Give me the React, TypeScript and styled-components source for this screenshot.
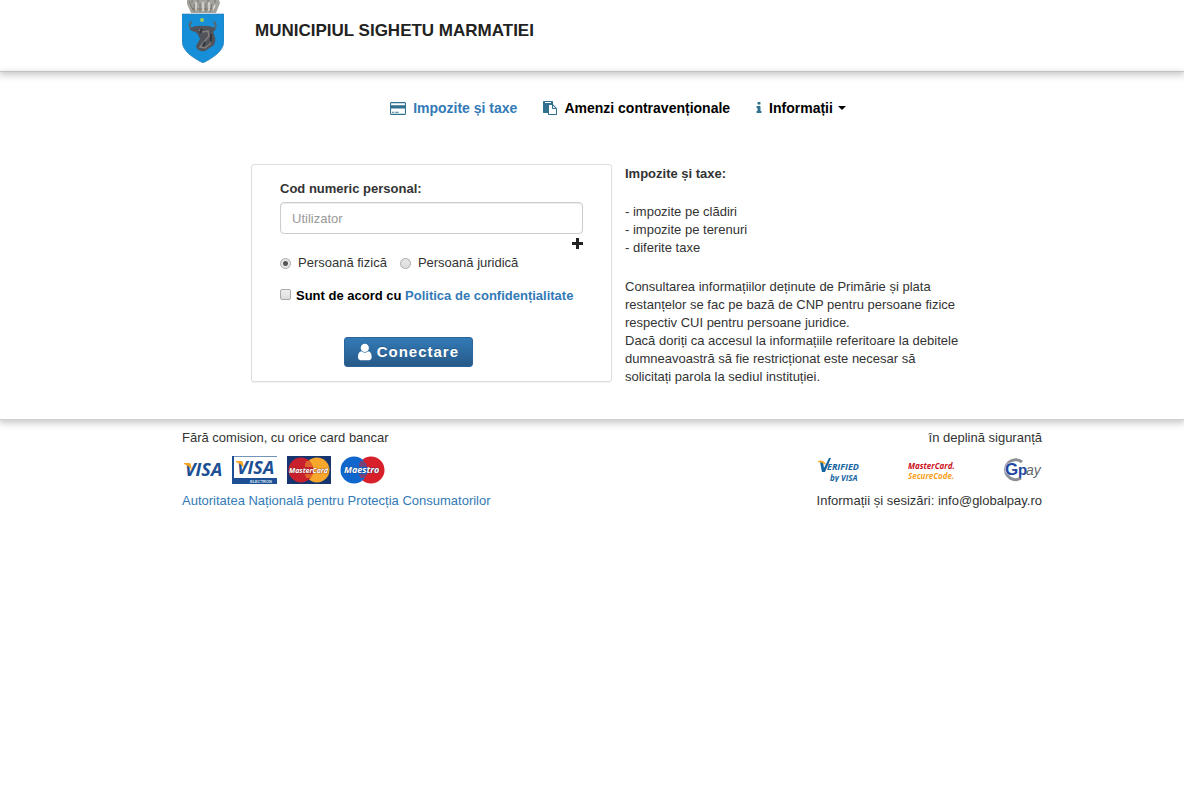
import React from "react";
import styled, { createGlobalStyle } from "styled-components";

const GlobalStyle = createGlobalStyle`
  *, *::before, *::after { box-sizing: border-box; }
  body {
    margin: 0;
    background: #fff;
    color: #333;
    font: 13px/18px "Liberation Sans", Arial, sans-serif;
  }
  a { color: #337ab7; text-decoration: none; }
`;

const Shell = styled.div`
  max-width: 900px;
  margin: 0 auto;
  padding-left: 40px;
`;

const Header = styled.header`
  border-bottom: 1px solid #d0d0d0;
  box-shadow: 0 2px 7px 1px rgba(0, 0, 0, 0.22);
`;

const Brand = styled(Shell)`
  display: flex;
  gap: 31px;
  height: 71px;
`;

const Title = styled.h1`
  margin: 21px 0 0;
  font-size: 17px;
  line-height: 20px;
  color: #222;
`;

const Main = styled.main`
  border-bottom: 1px solid #d0d0d0;
  box-shadow: 0 2px 7px 1px rgba(0, 0, 0, 0.22);
  padding-bottom: 33px;
`;

const Nav = styled.nav`
  display: flex;
  justify-content: center;
  gap: 26px;
  padding: 27px 0 47px 52px;
`;

const NavLink = styled.a<{ $active?: boolean }>`
  display: flex;
  align-items: center;
  gap: 7px;
  font-size: 14px;
  line-height: 18px;
  font-weight: bold;
  color: ${(p) => (p.$active ? "#337ab7" : "#000")};
`;

const Caret = styled.span`
  border: 4px solid transparent;
  border-top-color: #000;
  border-bottom: 0;
  margin-left: -2px;
`;

const Columns = styled.div`
  display: flex;
  align-items: flex-start;
  gap: 13px;
  padding-left: 69px;
`;

const Card = styled.form`
  flex: 0 1 361px;
  border: 1px solid #ddd;
  border-radius: 3px;
  box-shadow: 0 1px 1px rgba(0, 0, 0, 0.05);
  padding: 15px 28px 14px;
`;

const FieldLabel = styled.label`
  display: block;
  font-weight: bold;
  margin-bottom: 4px;
`;

const Field = styled.input`
  display: block;
  width: 100%;
  height: 32px;
  padding: 0 11px;
  border: 1px solid #ccc;
  border-radius: 4px;
  font: inherit;
  box-shadow: inset 0 1px 1px rgba(0, 0, 0, 0.075);
  &::placeholder { color: #999; }
`;

const Expand = styled.button`
  display: block;
  margin: 3px 0 0 auto;
  padding: 0;
  border: 0;
  background: none;
  height: 12px;
  line-height: 0;
`;

const Options = styled.div`
  display: flex;
  gap: 13px;
  margin-top: 5px;
`;

const Option = styled.label`
  display: flex;
  align-items: center;
  gap: 7px;
`;

const Radio = styled.input`
  appearance: none;
  width: 11px;
  height: 11px;
  margin: 0;
  border: 1px solid #aaa;
  border-radius: 50%;
  background: linear-gradient(#e6e6e6, #ddd);
  &:checked {
    background: radial-gradient(circle, #555 0 2px, #e6e6e6 3px);
  }
`;

const Check = styled.input`
  appearance: none;
  width: 11px;
  height: 11px;
  margin: 0 5px 0 0;
  border: 1px solid #aaa;
  border-radius: 2px;
  background: linear-gradient(#eee, #ddd);
`;

const Consent = styled.div`
  margin-top: 15px;
  font-weight: bold;
  color: #000;
`;

const Submit = styled.button`
  display: flex;
  align-items: center;
  gap: 5px;
  width: 129px;
  height: 30px;
  margin: 32px 0 0 64px;
  padding: 0 13px;
  border: 1px solid #2b669a;
  border-radius: 3px;
  background: linear-gradient(#337ab7, #265a88);
  color: #fff;
  font: bold 15px/20px "Liberation Sans", Arial, sans-serif;
  letter-spacing: 1px;
  text-shadow: 0 -1px 0 rgba(0, 0, 0, 0.2);
`;

const Info = styled.section`
  flex: 0 1 340px;
`;

const Heading = styled.h2`
  margin: 0 0 19px;
  font-size: 13px;
  line-height: 20px;
`;

const Para = styled.p`
  margin: 0 0 21px;
  &:last-child { margin-bottom: 0; }
`;

const Footer = styled.footer`
  padding-top: 9px;
`;

const FooterRow = styled(Shell)`
  display: flex;
  justify-content: space-between;
  align-items: center;
`;

const Logos = styled.div<{ $gap: number }>`
  display: flex;
  align-items: center;
  gap: ${(p) => p.$gap}px;
  height: 45px;
`;

const Glyph = ({ d, w = 14, vb = "0 0 1792 1792", h = 14 }: { d: string; w?: number; h?: number; vb?: string }) => (
  <svg width={w} height={h} viewBox={vb} fill="currentColor" aria-hidden="true"><path d={d} /></svg>
);

const NavIcon = styled.span`
  display: flex;
  color: #31708f;
`;

const CARD = "M1760 128q66 0 113 47t47 113v1216q0 66-47 113t-113 47h-1600q-66 0-113-47t-47-113v-1216q0-66 47-113t113-47h1600zm-1600 128q-13 0-22.5 9.5t-9.5 22.5v224h1664v-224q0-13-9.5-22.5t-22.5-9.5h-1600zm1600 1280q13 0 22.5-9.5t9.5-22.5v-608h-1664v608q0 13 9.5 22.5t22.5 9.5h1600zm-1504-128v-128h256v128h-256zm384 0v-128h384v128h-384z";
const PASTE = "M768 1664h896v-640h-416q-40 0-68-28t-28-68v-416h-384v1152zm256-1440v-64q0-13-9.5-22.5t-22.5-9.5h-704q-13 0-22.5 9.5t-9.5 22.5v64q0 13 9.5 22.5t22.5 9.5h704q13 0 22.5-9.5t9.5-22.5zm256 672h299l-299-299v299zm512 128v672q0 40-28 68t-68 28h-960q-40 0-68-28t-28-68v-160h-544q-40 0-68-28t-28-68v-1344q0-40 28-68t68-28h1088q40 0 68 28t28 68v328q21 13 36 28l408 408q28 28 48 76t20 88z";
const INFO = "M1216 1344v128q0 26-19 45t-45 19h-512q-26 0-45-19t-19-45v-128q0-26 19-45t45-19h64v-384h-64q-26 0-45-19t-19-45v-128q0-26 19-45t45-19h384q26 0 45 19t19 45v576h64q26 0 45 19t19 45zm-128-1152v192q0 26-19 45t-45 19h-256q-26 0-45-19t-19-45v-192q0-26 19-45t45-19h256q26 0 45 19t19 45z";
const USER = "M1536 1399q0 109-62.5 187t-150.5 78h-854q-88 0-150.5-78t-62.5-187q0-85 8.5-160.5t31.5-152 58.5-131 94-89 134.5-34.5q131 128 313 128t313-128q76 0 134.5 34.5t94 89 58.5 131 31.5 152 8.5 160.5zm-256-887q0 159-112.5 271.5t-271.5 112.5-271.5-112.5-112.5-271.5 112.5-271.5 271.5-112.5 271.5 112.5 112.5 271.5z";

const Crest = () => (
  <svg width="42" height="63" viewBox="0 0 42 63" role="img" aria-label="Stema">
    <path d="M5 0h32l1 3-4 10H9L5 4Z" fill="#a5a39d" />
    <path d="M7 1l4 9M12 4v8M18 3v9M24 3v9M30 4l-2 8M10 9h23M10 0v3M16 0v3M26 0v3M33 0v3" stroke="#77766f" strokeWidth="1" fill="none" />
    <path d="M14 2v8M21 2v9M27 2v9M33 5l-2 5" stroke="#dedbd4" strokeWidth="1.5" />
    <path d="M0 14h42v27c0 9-9 16-21 22C9 57 0 50 0 41Z" fill="#178ed8" stroke="#2d82b4" strokeWidth=".6" />
    <circle cx="20" cy="20" r="2" fill="#a0c95c" />
    <path d="M10 29c-3-2-3-5-1-7M31 29c4-2 3-5 1-7" fill="none" stroke="#5a666e" strokeWidth="2" strokeLinecap="round" />
    <path d="M8 28q6-3 13-2 7-1 13 3l-3 3q4 7 1 13l-9 6q-8 1-9-5l4-7-3-6-7-3Z" fill="#50545a" />
    <path d="M17 30l4 2 5-1 1 5-6 7-3 4 5 1 6-5" fill="none" stroke="#837d7c" strokeWidth="1.5" />
    <path d="M20 29l-2 4M23 42l-2 4M29 34v7" stroke="#30343c" strokeWidth="2" />
  </svg>
);

const Visa = () => (
  <svg width="41" height="28" viewBox="0 0 41 28" role="img" aria-label="Visa">
    <text x="3" y="20" fontFamily="Open Sans" fontWeight="bold" fontStyle="italic" fontSize="18" fill="#1c4f93">VISA</text>
    <path d="M2 7h5q2 0 2 2l1 6q-2-5-8-7Z" fill="#f5a623" />
  </svg>
);

const Electron = () => (
  <svg width="45" height="28" viewBox="0 0 45 28" role="img" aria-label="Visa Electron">
    <path d="M.5 28V.5H45" fill="none" stroke="#7593b8" />
    <path d="M0 0h2v28H0ZM2 22h43v6H2Z" fill="#1c4f93" />
    <text x="5" y="18" fontFamily="Open Sans" fontWeight="bold" fontStyle="italic" fontSize="18" fill="#1c4f93">VISA</text>
    <path d="M4 5h5q2 0 2 2l1 6q-2-5-8-7Z" fill="#f5a623" />
    <text x="18" y="27" fontFamily="Liberation Sans" fontWeight="bold" fontSize="4" fill="#dfe8f2">ELECTRON</text>
  </svg>
);

const MasterCard = () => (
  <svg width="45" height="28" viewBox="0 0 45 28" role="img" aria-label="MasterCard">
    <path d="M1 0h44v28H1Z" fill="#17356f" />
    <circle cx="31" cy="14" r="12.5" fill="#f6a72c" />
    <circle cx="15" cy="14" r="12.5" fill="#c8202c" />
    <path d="M20 6h5M19 8h8M19 10h8M19 19h8M20 21h6" stroke="#f6a72c" />
    <text x="3" y="17" fontFamily="Open Sans" fontWeight="bold" fontStyle="italic" fontSize="7" fill="#fff" stroke="#7a2420" strokeWidth=".6" paintOrder="stroke">MasterCard</text>
  </svg>
);

const Maestro = () => (
  <svg width="45" height="28" viewBox="0 0 45 28" role="img" aria-label="Maestro">
    <circle cx="31" cy="14" r="13.5" fill="#d8202a" />
    <circle cx="14" cy="14" r="13.5" fill="#0f66cc" />
    <path d="M20 6h5M19 8h7M19 10h8M19 19h8M20 21h6" stroke="#d8202a" />
    <text x="4" y="17" fontFamily="Open Sans" fontWeight="bold" fontStyle="italic" fontSize="9" fill="#fff" stroke="#123a78" strokeWidth=".6" paintOrder="stroke">Maestro</text>
  </svg>
);

const Verified = () => (
  <svg width="42" height="24" viewBox="0 0 42 24" role="img" aria-label="Verified by Visa">
    <path d="M2 4h3l1 6L11 0h2L7 14H4Z" fill="#14649f" />
    <path d="M0 3q6-2 8 4Q4 4 0 4Z" fill="#f5a623" />
    <text x="9" y="12" fontFamily="Open Sans" fontWeight="bold" fontStyle="italic" fontSize="9" fill="#14649f">ERIFIED</text>
    <text x="12" y="23" fontFamily="Open Sans" fontWeight="bold" fontStyle="italic" fontSize="8" fill="#14649f">by VISA</text>
  </svg>
);

const SecureCode = () => (
  <svg width="46" height="24" viewBox="0 0 46 24" role="img" aria-label="MasterCard SecureCode">
    <text x="0" y="11" fontFamily="Open Sans" fontWeight="bold" fontStyle="italic" fontSize="8" fill="#cc1020">MasterCard.</text>
    <text x="0" y="21" fontFamily="Open Sans" fontWeight="bold" fontStyle="italic" fontSize="8" fill="#f9a11b">SecureCode.</text>
  </svg>
);

const Gpay = () => (
  <svg width="40" height="24" viewBox="0 0 40 24" role="img" aria-label="Gpay">
    <path d="M20 4A10 10 0 1 0 19 20" fill="none" stroke="#8c8f96" strokeWidth="3" />
    <g fontFamily="Liberation Sans" fontWeight="bold">
      <text x="3" y="17" fontSize="17" fill="#2347a0" stroke="#fff" strokeWidth="1" paintOrder="stroke">G</text>
      <text x="16" y="17" fontSize="15" fill="#2347a0">p</text>
      <text x="24" y="17" fontStyle="italic" fontWeight="normal" fontSize="14" fill="#66686e">ay</text>
    </g>
  </svg>
);

export default function App() {
  return (
    <>
      <GlobalStyle />
      <Header>
        <Brand>
          <Crest />
          <Title>MUNICIPIUL SIGHETU MARMATIEI</Title>
        </Brand>
      </Header>
      <Main>
        <Nav>
          <NavLink href="#taxe" $active><NavIcon><Glyph d={CARD} w={16} h={15} vb="0 0 1920 1792" /></NavIcon>Impozite și taxe</NavLink>
          <NavLink href="#amenzi"><NavIcon><Glyph d={PASTE} /></NavIcon>Amenzi contravenționale</NavLink>
          <NavLink href="#informatii"><NavIcon><Glyph d={INFO} w={6} vb="512 0 768 1792" /></NavIcon>Informații <Caret /></NavLink>
        </Nav>
        <Shell>
          <Columns>
            <Card onSubmit={(e) => e.preventDefault()}>
              <FieldLabel htmlFor="cnp">Cod numeric personal:</FieldLabel>
              <Field id="cnp" placeholder="Utilizator" />
              <Expand type="button" aria-label="Mai multe">
                <svg width="11" height="11" viewBox="0 0 11 11"><path d="M4 0h3v4h4v3H7v4H4V7H0V4h4Z" fill="#222" /></svg>
              </Expand>
              <Options>
                <Option><Radio type="radio" name="tip" defaultChecked />Persoană fizică</Option>
                <Option><Radio type="radio" name="tip" />Persoană juridică</Option>
              </Options>
              <Consent>
                <Check type="checkbox" id="acord" />
                <label htmlFor="acord">Sunt de acord cu</label> <a href="#politica">Politica de confidențialitate</a>
              </Consent>
              <Submit type="submit"><Glyph d={USER} w={16} h={18} vb="256 128 1280 1536" />Conectare</Submit>
            </Card>
            <Info>
              <Heading>Impozite și taxe:</Heading>
              <Para>- impozite pe clădiri<br />- impozite pe terenuri<br />- diferite taxe</Para>
              <Para>
                Consultarea informațiilor deținute de Primărie și plata restanțelor se fac pe bază de CNP pentru persoane fizice respectiv CUI pentru persoane juridice.<br />
                Dacă doriți ca accesul la informațiile referitoare la debitele dumneavoastră să fie restricționat este necesar să solicitați parola la sediul instituției.
              </Para>
            </Info>
          </Columns>
        </Shell>
      </Main>
      <Footer>
        <FooterRow><span>Fără comision, cu orice card bancar</span><span>în deplină siguranță</span></FooterRow>
        <FooterRow>
          <Logos $gap={9}><Visa /><Electron /><MasterCard /><Maestro /></Logos>
          <Logos $gap={48}><Verified /><SecureCode /><Gpay /></Logos>
        </FooterRow>
        <FooterRow><a href="#anpc">Autoritatea Națională pentru Protecția Consumatorilor</a><span>Informații și sesizări: info@globalpay.ro</span></FooterRow>
      </Footer>
    </>
  );
}
